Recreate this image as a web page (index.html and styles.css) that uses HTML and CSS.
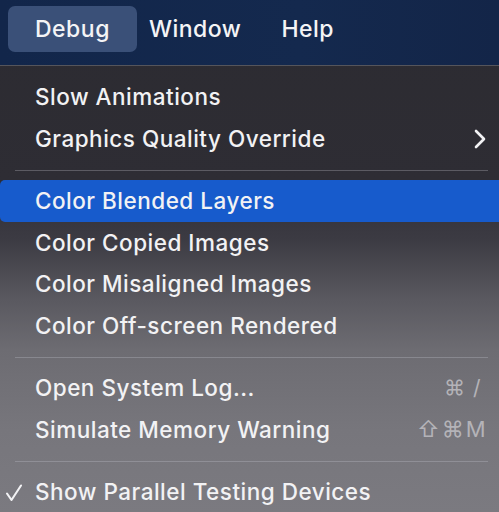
FILE: index.html
```html
<!DOCTYPE html>
<html>
<head>
<meta charset="utf-8">
<link rel="stylesheet" href="styles.css">
</head>
<body>
<div class="screen">
  <nav class="menubar">
    <span class="mb-item active">Debug</span>
    <span class="mb-item win">Window</span>
    <span class="mb-item help">Help</span>
  </nav>
  <div class="menu">
    <div class="row"><span class="label">Slow Animations</span></div>
    <div class="row"><span class="label">Graphics Quality Override</span>
      <svg class="chev" width="12" height="20" viewBox="0 0 12 20"><path d="M2 2 L10 10 L2 18" fill="none" stroke="#f2f2f4" stroke-width="2.6" stroke-linecap="round" stroke-linejoin="round"/></svg>
    </div>
    <div class="sep"></div>
    <div class="row selected"><span class="label">Color Blended Layers</span></div>
    <div class="row"><span class="label">Color Copied Images</span></div>
    <div class="row"><span class="label">Color Misaligned Images</span></div>
    <div class="row"><span class="label">Color Off-screen Rendered</span></div>
    <div class="sep"></div>
    <div class="row"><span class="label">Open System Log...</span><span class="key key1">⌘ /</span></div>
    <div class="row"><span class="label">Simulate Memory Warning</span><span class="key key2">⇧⌘M</span></div>
    <div class="sep"></div>
    <div class="row"><svg class="check" width="18" height="20" viewBox="0 0 18 20"><path d="M2 10.5 L6.5 17 L16 2.5" fill="none" stroke="#f2f2f4" stroke-width="2.1" stroke-linecap="round" stroke-linejoin="round"/></svg><span class="label">Show Parallel Testing Devices</span></div>
  </div>
</div>
</body>
</html>
```
FILE: styles.css
```css
html, body {
  margin: 0;
  padding: 0;
  width: 499px;
  height: 512px;
  overflow: hidden;
}
.screen {
  width: 499px;
  height: 512px;
  font-family: Inter, "Noto Sans", sans-serif;
  color: #f2f2f4;
  background: linear-gradient(to bottom, #2c2b31 0px, #2e2d34 180px, #3c3b43 240px, #5a5960 300px, #6d6c72 350px, #77767c 430px, #7b7a80 512px);
}
.menubar {
  height: 65px;
  border-bottom: 1px solid #55555b;
  background: linear-gradient(to right, #12264a 0%, #14294e 60%, #132548 100%);
  display: flex;
  align-items: flex-start;
  padding-left: 8px;
}
.mb-item {
  font-size: 23px;
  font-weight: 500;
  letter-spacing: 0.5px;
  height: 46px;
  line-height: 46px;
  margin-top: 6px;
  border-radius: 7px;
  color: #f4f4f6;
}
.mb-item.active {
  background: #3a5078;
  padding: 0 27px;
}
.mb-item.win { margin-left: 12px; }
.mb-item.help { margin-left: 40px; }
.menu {
  padding-top: 10px;
}
.row {
  height: 41.5px;
  display: flex;
  align-items: center;
  position: relative;
  font-size: 22.5px;
  letter-spacing: 0.5px;
  font-weight: 500;
  padding-left: 35px;
}
.row.selected {
  background: #175bcc;
  border-radius: 5px 0 0 5px;
}
.sep {
  height: 21px;
  display: flex;
  align-items: center;
  padding: 0 11px 0 15px;
}
.sep::before {
  content: "";
  flex: 1;
  height: 1px;
  background: rgba(200, 200, 210, 0.3);
  margin-top: 1px;
}
.chev {
  position: absolute;
  right: 13px;
  top: 11px;
}
.key {
  position: absolute;
  color: #b4b3b8;
  font-size: 21px;
  font-weight: 400;
}
.key1 { left: 444px; letter-spacing: 1px; }
.key2 { left: 417px; letter-spacing: 2px; font-size: 22px; }
.check {
  position: absolute;
  left: 5px;
  top: 12px;
}
```
